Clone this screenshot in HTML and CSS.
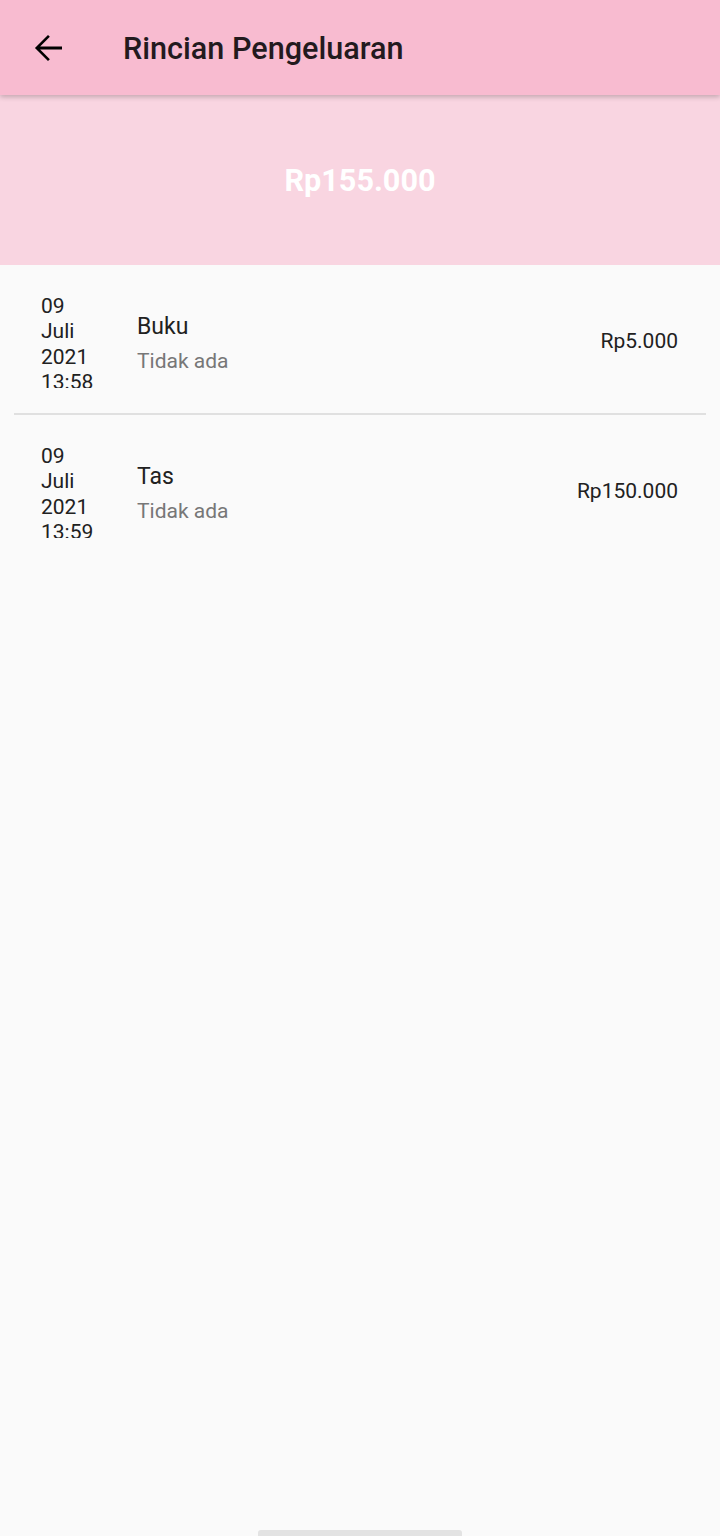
FILE: index.html
```html
<!DOCTYPE html>
<html lang="id">
<head>
<meta charset="utf-8">
<title>Rincian Pengeluaran</title>
<link rel="stylesheet" href="styles.css">
</head>
<body>
<div class="screen">
  <header class="appbar">
    <button class="back" aria-label="Kembali">
      <svg width="42" height="42" viewBox="0 0 24 24"><path d="M20 11.15H7.5l5.55-5.55L12 4.55 4.55 12 12 19.45l1.05-1.05-5.55-5.55H20z" fill="#000"/></svg>
    </button>
    <h1 class="title">Rincian Pengeluaran</h1>
  </header>
  <section class="total">Rp155.000</section>
  <ul class="list">
    <li class="row">
      <div class="date"><div class="date-text">09<br>Juli<br>2021<br>13:58</div></div>
      <div class="info">
        <div class="name">Buku</div>
        <div class="desc">Tidak ada</div>
      </div>
      <div class="amount">Rp5.000</div>
    </li>
    <li class="divider"></li>
    <li class="row">
      <div class="date"><div class="date-text">09<br>Juli<br>2021<br>13:59</div></div>
      <div class="info">
        <div class="name">Tas</div>
        <div class="desc">Tidak ada</div>
      </div>
      <div class="amount">Rp150.000</div>
    </li>
  </ul>
  <div class="spacer"></div>
  <div class="home"><span class="home-bar"></span></div>
</div>
</body>
</html>
```
FILE: styles.css
```css
* { box-sizing: border-box; }
html, body { margin: 0; padding: 0; }
body {
  font-family: Roboto, "Noto Sans", sans-serif;
  background: #fafafa;
  color: #212121;
}
.screen {
  width: 720px;
  height: 1536px;
  display: flex;
  flex-direction: column;
  overflow: hidden;
}
.appbar {
  height: 95px;
  background: #f8bbd0;
  display: flex;
  align-items: center;
  box-shadow: 0 2px 5px rgba(0,0,0,0.22);
  position: relative;
  z-index: 2;
  flex: none;
}
.back {
  width: 56px;
  height: 56px;
  margin-left: 20px;
  border: 0;
  padding: 0;
  background: none;
  display: flex;
  align-items: center;
  justify-content: center;
}
.title {
  margin: 2px 0 0 47px;
  font-size: 30.6px;
  font-weight: 500;
  color: #231a1e;
  letter-spacing: 0;
}
.total {
  height: 170px;
  flex: none;
  background: #f9d5e1;
  color: #ffffff;
  font-weight: 700;
  font-size: 30.6px;
  display: flex;
  align-items: center;
  justify-content: center;
}
.list {
  list-style: none;
  margin: 0;
  padding: 0;
  flex: none;
}
.row {
  height: 148px;
  display: flex;
  align-items: center;
  padding: 0 42px 0 41px;
}
.date {
  width: 96px;
  flex: none;
  height: 98px;
  overflow: hidden;
  padding-top: 4px;
}
.date-text {
  font-size: 21px;
  line-height: 25.3px;
  color: #212121;
}
.info {
  flex: 1;
  display: flex;
  flex-direction: column;
  gap: 7px;
  padding-top: 8px;
}
.name {
  font-size: 23px;
  line-height: 28px;
  color: #212121;
}
.desc {
  font-size: 21px;
  line-height: 26px;
  color: #777777;
}
.amount {
  font-size: 21px;
  color: #212121;
  padding-top: 3px;
}
.divider {
  height: 2px;
  margin: 0 14px;
  background: #e0e0e0;
}
.spacer { flex: 1; }
.home {
  height: 8px;
  display: flex;
  justify-content: center;
  align-items: flex-end;
  flex: none;
}
.home-bar {
  width: 204px;
  height: 6px;
  border-radius: 3px 3px 0 0;
  background: #e3e3e3;
}
```
